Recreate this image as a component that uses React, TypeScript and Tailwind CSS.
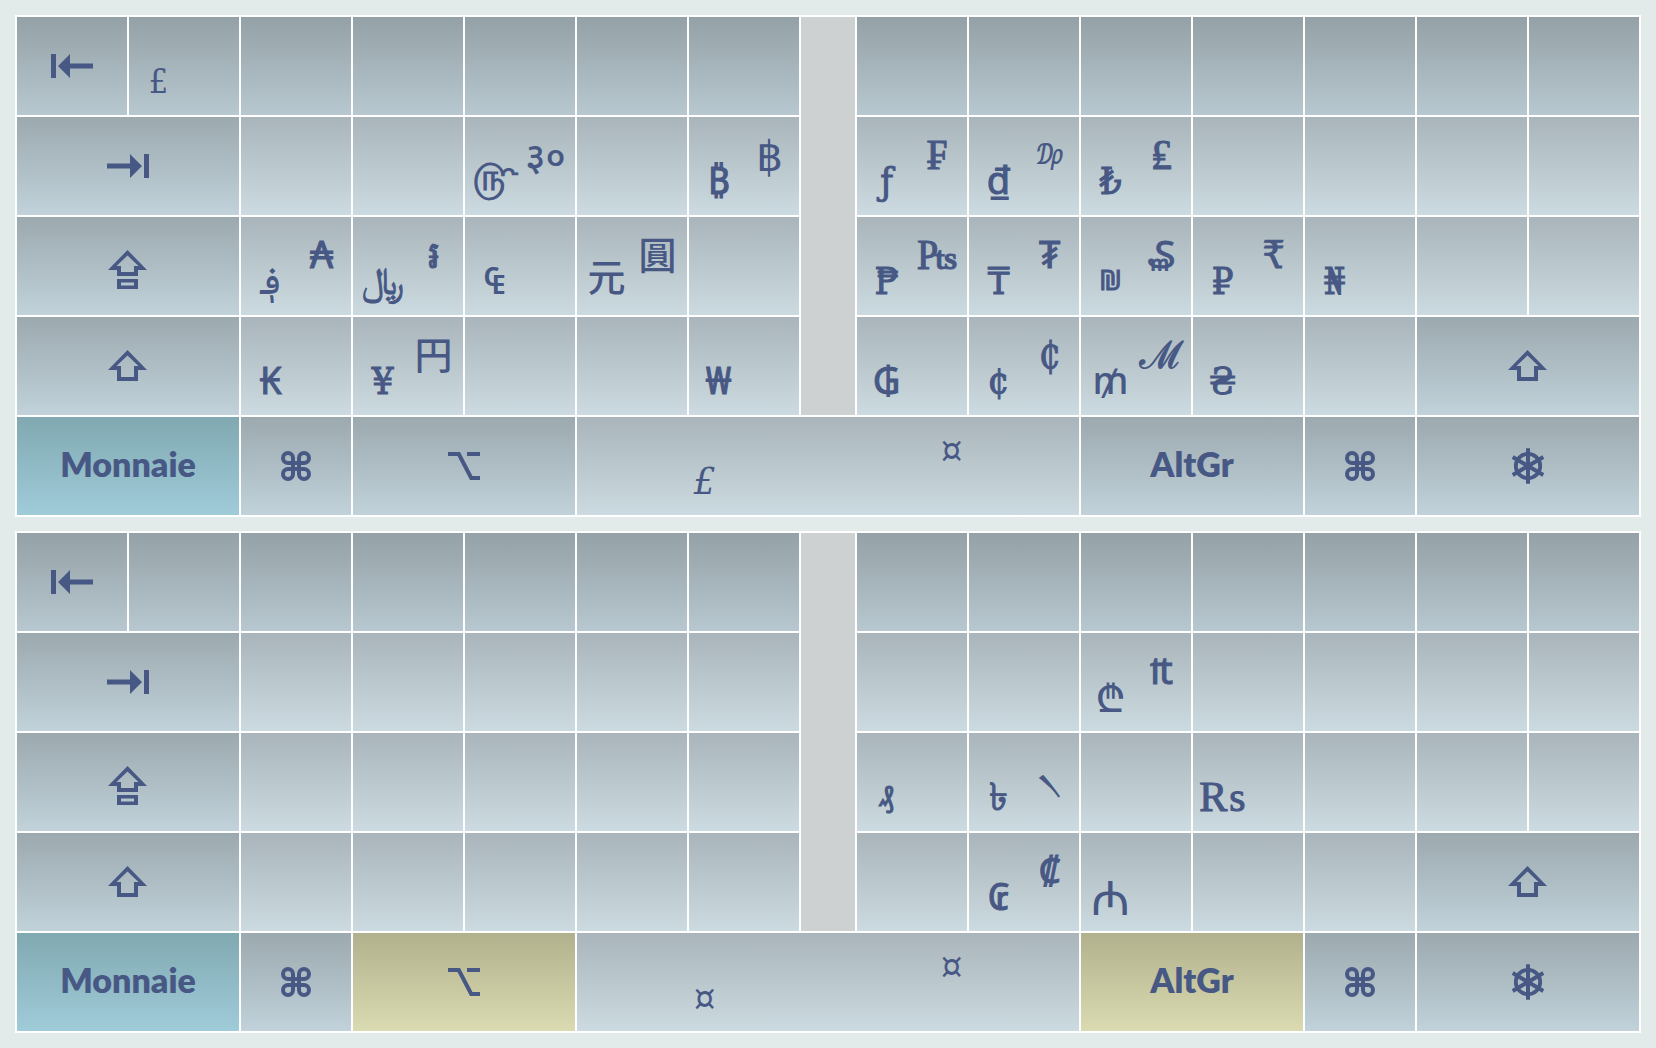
import React from "react";

type Tone = "top" | "plain" | "mod" | "teal" | "olive";
type IconName = "backspace" | "tab" | "caps" | "shift" | "command" | "option" | "helm";

interface Glyph {
  char: string;
  font?: string;
}

interface KeyDef {
  name?: string;
  span?: string;
  tone: Tone;
  label?: string;
  icon?: IconName;
  lower?: Glyph;
  upper?: Glyph;
}

const toneClass: Record<Tone, string> = {
  top: "from-[#94a1a6] to-[#b8c8d0]",
  plain: "from-[#a9b5ba] to-[#ccdbe1]",
  mod: "from-[#9ca9af] to-[#c1d2da]",
  teal: "from-[#80a9b1] to-[#a0cbd9]",
  olive: "from-[#b1b28d] to-[#dadbb1]",
};

const SERIF =
  "font-['DejaVu_Serif_Condensed','DejaVu_Serif','Noto_Sans',serif] text-[38px] [-webkit-text-stroke:1px]";
const PLAIN = "font-['DejaVu_Serif_Condensed','DejaVu_Serif','Noto_Sans',serif] text-[38px] font-medium";
const LIGHT = "font-['DejaVu_Serif_Condensed','DejaVu_Serif',serif] text-[34px]";
const ITALIC = "font-['DejaVu_Serif_Condensed','DejaVu_Serif',serif] text-[38px] italic";
const TIMES = "font-['Liberation_Serif','DejaVu_Serif_Condensed',serif] text-[42px] [-webkit-text-stroke:1px]";
const SANS = "font-['Noto_Sans','DejaVu_Sans',sans-serif] text-[38px] font-medium";
const SANS_BOLD = "font-['Noto_Sans','DejaVu_Sans',sans-serif] text-[42px] font-medium";
const TAMIL = "font-['Noto_Sans','DejaVu_Sans',sans-serif] text-[38px] leading-7 [-webkit-text-stroke:1px]";
const LARGE = "font-['Noto_Sans','DejaVu_Sans',sans-serif] text-[48px]";
const SMALL = "font-['DejaVu_Serif_Condensed','Noto_Sans',serif] text-[28px] [-webkit-text-stroke:1px]";
const SCRIPT = "font-['DejaVu_Serif_Condensed','Noto_Sans',serif] text-[28px]";
const CJK = "font-['Noto_Sans_CJK_JP',sans-serif] text-[38px] font-medium";

const g = (char: string, font: string = SERIF): Glyph => ({ char, font });
const key = (lower?: Glyph, upper?: Glyph): KeyDef => ({ tone: "plain", lower, upper });
const blanks = (count: number, tone: Tone = "plain"): KeyDef[] =>
  Array.from({ length: count }, () => ({ tone }));

const backspace: KeyDef = { name: "Backspace", tone: "top", icon: "backspace" };
const tab: KeyDef = { name: "Tab", tone: "mod", icon: "tab", span: "col-span-2" };
const caps: KeyDef = { name: "Caps lock", tone: "mod", icon: "caps", span: "col-span-2" };
const shift: KeyDef = { name: "Shift", tone: "mod", icon: "shift", span: "col-span-2" };
const command: KeyDef = { name: "Command", tone: "mod", icon: "command" };
const control: KeyDef = { name: "Control", tone: "mod", icon: "helm", span: "col-span-2" };

const bottomRow = (tone: Tone, spaceLower: Glyph): KeyDef[] => [
  { tone: "teal", label: "Monnaie", span: "col-span-2" },
  command,
  { name: "Option", tone, icon: "option", span: "col-span-2" },
  { name: "Space", tone: "plain", span: "col-span-5", lower: spaceLower, upper: g("¤", PLAIN) },
  { tone, label: "AltGr", span: "col-span-2" },
  command,
  control,
];

interface Board {
  title: string;
  rows: { left: KeyDef[]; right: KeyDef[] }[];
  bottom: KeyDef[];
}

const boards: Board[] = [
  {
    title: "Monnaie",
    rows: [
      {
        left: [backspace, { tone: "top", lower: g("£", LIGHT) }, ...blanks(5, "top")],
        right: blanks(7, "top"),
      },
      {
        left: [tab, ...blanks(2), key(g("௹", TAMIL), g("३०", SANS)), ...blanks(1), key(g("₿"), g("฿", SANS_BOLD))],
        right: [key(g("ƒ"), g("₣", TIMES)), key(g("₫"), g("₯", SCRIPT)), key(g("₺"), g("₤", TIMES)), ...blanks(4)],
      },
      {
        left: [
          caps,
          key(g("؋", PLAIN), g("₳")),
          key(g("﷼"), g("៛")),
          key(g("₠", PLAIN)),
          key(g("元", CJK), g("圓", CJK)),
          ...blanks(1),
        ],
        right: [
          key(g("₱"), g("₧", TIMES)),
          key(g("₸"), g("₮")),
          key(g("₪", SMALL), g("₷")),
          key(g("₽"), g("₹")),
          key(g("₦")),
          ...blanks(2),
        ],
      },
      {
        left: [shift, key(g("₭")), key(g("¥"), g("円", CJK)), ...blanks(2), key(g("₩"))],
        right: [key(g("₲")), key(g("¢"), g("₵")), key(g("₥", PLAIN), g("ℳ")), key(g("₴")), ...blanks(1), shift],
      },
    ],
    bottom: bottomRow("mod", g("£", ITALIC)),
  },
  {
    title: "Monnaie AltGr",
    rows: [
      { left: [backspace, ...blanks(6, "top")], right: blanks(7, "top") },
      { left: [tab, ...blanks(5)], right: [...blanks(2), key(g("₾", SANS), g("₶")), ...blanks(4)] },
      {
        left: [caps, ...blanks(5)],
        right: [key(g("₰", SMALL)), key(g("৳"), g("৲")), ...blanks(1), key(g("₨", TIMES)), ...blanks(3)],
      },
      {
        left: [shift, ...blanks(5)],
        right: [...blanks(1), key(g("₢"), g("₡")), key(g("₼", LARGE)), ...blanks(2), shift],
      },
    ],
    bottom: bottomRow("olive", g("¤", PLAIN)),
  },
];

function Icon({ name }: { name: IconName }) {
  switch (name) {
    case "backspace":
      return (
        <svg width="42" height="24" viewBox="0 0 42 24" fill="currentColor" aria-hidden="true">
          <path d="M0 0h5v24H0zM7 12 19 0v9.5h23v5H19V24z" />
        </svg>
      );
    case "tab":
      return (
        <svg width="42" height="24" viewBox="0 0 42 24" fill="currentColor" aria-hidden="true">
          <path d="M42 0h-5v24h5zM35 12 23 0v9.5H0v5h23V24z" />
        </svg>
      );
    case "caps":
      return (
        <svg width="40" height="40" viewBox="0 0 40 40" fill="currentColor" fillRule="evenodd" aria-hidden="true">
          <path d="M19.5 0 39 20h-9v6H9v-6H0zM19.5 5.500 8.500 16h4.500v6h13v-6h4.500z" />
          <path d="M9 29h21v10H9zM13 32.500v3h13v-3z" />
        </svg>
      );
    case "shift":
      return (
        <svg width="40" height="32" viewBox="0 0 40 32" fill="currentColor" fillRule="evenodd" aria-hidden="true">
          <path d="M19.5 0 39 20h-9v11H9V20H0zM19.5 5.500 8.500 16h4.500v11h13V16h4.500z" />
        </svg>
      );
    case "command":
      return (
        <svg width="30" height="30" viewBox="0 0 30 30" fill="none" stroke="currentColor" strokeWidth="4" aria-hidden="true">
          <path d="M12 7v16a5 5 0 1 1-5-5h16a5 5 0 1 1-5 5V7a5 5 0 1 1 5 5H7a5 5 0 1 1 5-5z" />
        </svg>
      );
    case "option":
      return (
        <svg width="32" height="28" viewBox="0 0 32 28" fill="currentColor" aria-hidden="true">
          <path d="M0 0h12l12.500 24H32v4H22L9.500 4H0zM19 0h13v4H19z" />
        </svg>
      );
    case "helm":
      return (
        <svg width="36" height="36" viewBox="-18 -18 36 36" fill="none" stroke="currentColor" aria-hidden="true">
          <circle r="12.200" strokeWidth="3.800" />
          <path d="M0-17.700v35.400M-15.300-8.900l30.600 17.800M-15.300 8.900l30.600-17.800" strokeWidth="4" />
        </svg>
      );
  }
}

function Key({ def }: { def: KeyDef }) {
  const name = def.name ?? (def.label || def.lower ? undefined : "Blank key");
  return (
    <button
      type="button"
      aria-label={name}
      className={`h-[98px] min-w-0 bg-linear-to-b ${toneClass[def.tone]} ${def.span ?? ""}`}
    >
      {def.icon && (
        <span className={`flex justify-center ${def.icon === "caps" ? "pt-2" : ""}`}>
          <Icon name={def.icon} />
        </span>
      )}
      {def.label && (
        <span className="block pb-1 font-['Lato',sans-serif] text-[34px] leading-10 font-extrabold">{def.label}</span>
      )}
      {def.lower && (
        <span className="grid h-full grid-cols-2 px-1 leading-10 whitespace-nowrap">
          <span
            className={`flex h-10 justify-center self-end ${def.lower.font === CJK ? "mb-5" : "mb-3.5"} ${def.lower.font}`}
          >
            {def.lower.char}
          </span>
          {def.upper && (
            <span
              className={`flex h-10 justify-center ${def.name === "Space" ? "mt-3" : def.upper.font === CJK ? "mt-4" : "mt-4.5"} ${def.upper.font}`}
            >
              {def.upper.char}
            </span>
          )}
        </span>
      )}
    </button>
  );
}

function Keyboard({ board }: { board: Board }) {
  return (
    <section
      aria-label={board.title}
      className="grid grid-cols-[repeat(7,minmax(0,1fr))_54px_repeat(7,minmax(0,1fr))] gap-0.5 bg-white p-0.5"
    >
      {board.rows.map((row, i) => (
        <React.Fragment key={i}>
          {row.left.map((def, j) => (
            <Key key={`l${j}`} def={def} />
          ))}
          {i === 0 && <div className="row-span-4 bg-[#cdd1d1]" />}
          {row.right.map((def, j) => (
            <Key key={`r${j}`} def={def} />
          ))}
        </React.Fragment>
      ))}
      {board.bottom.map((def, j) => (
        <Key key={`b${j}`} def={def} />
      ))}
    </section>
  );
}

export default function App() {
  return (
    <main className="flex min-h-screen flex-col gap-3.5 bg-[#e2ebe9] p-[15px] text-[#475884]">
      {boards.map((board) => (
        <Keyboard key={board.title} board={board} />
      ))}
    </main>
  );
}
